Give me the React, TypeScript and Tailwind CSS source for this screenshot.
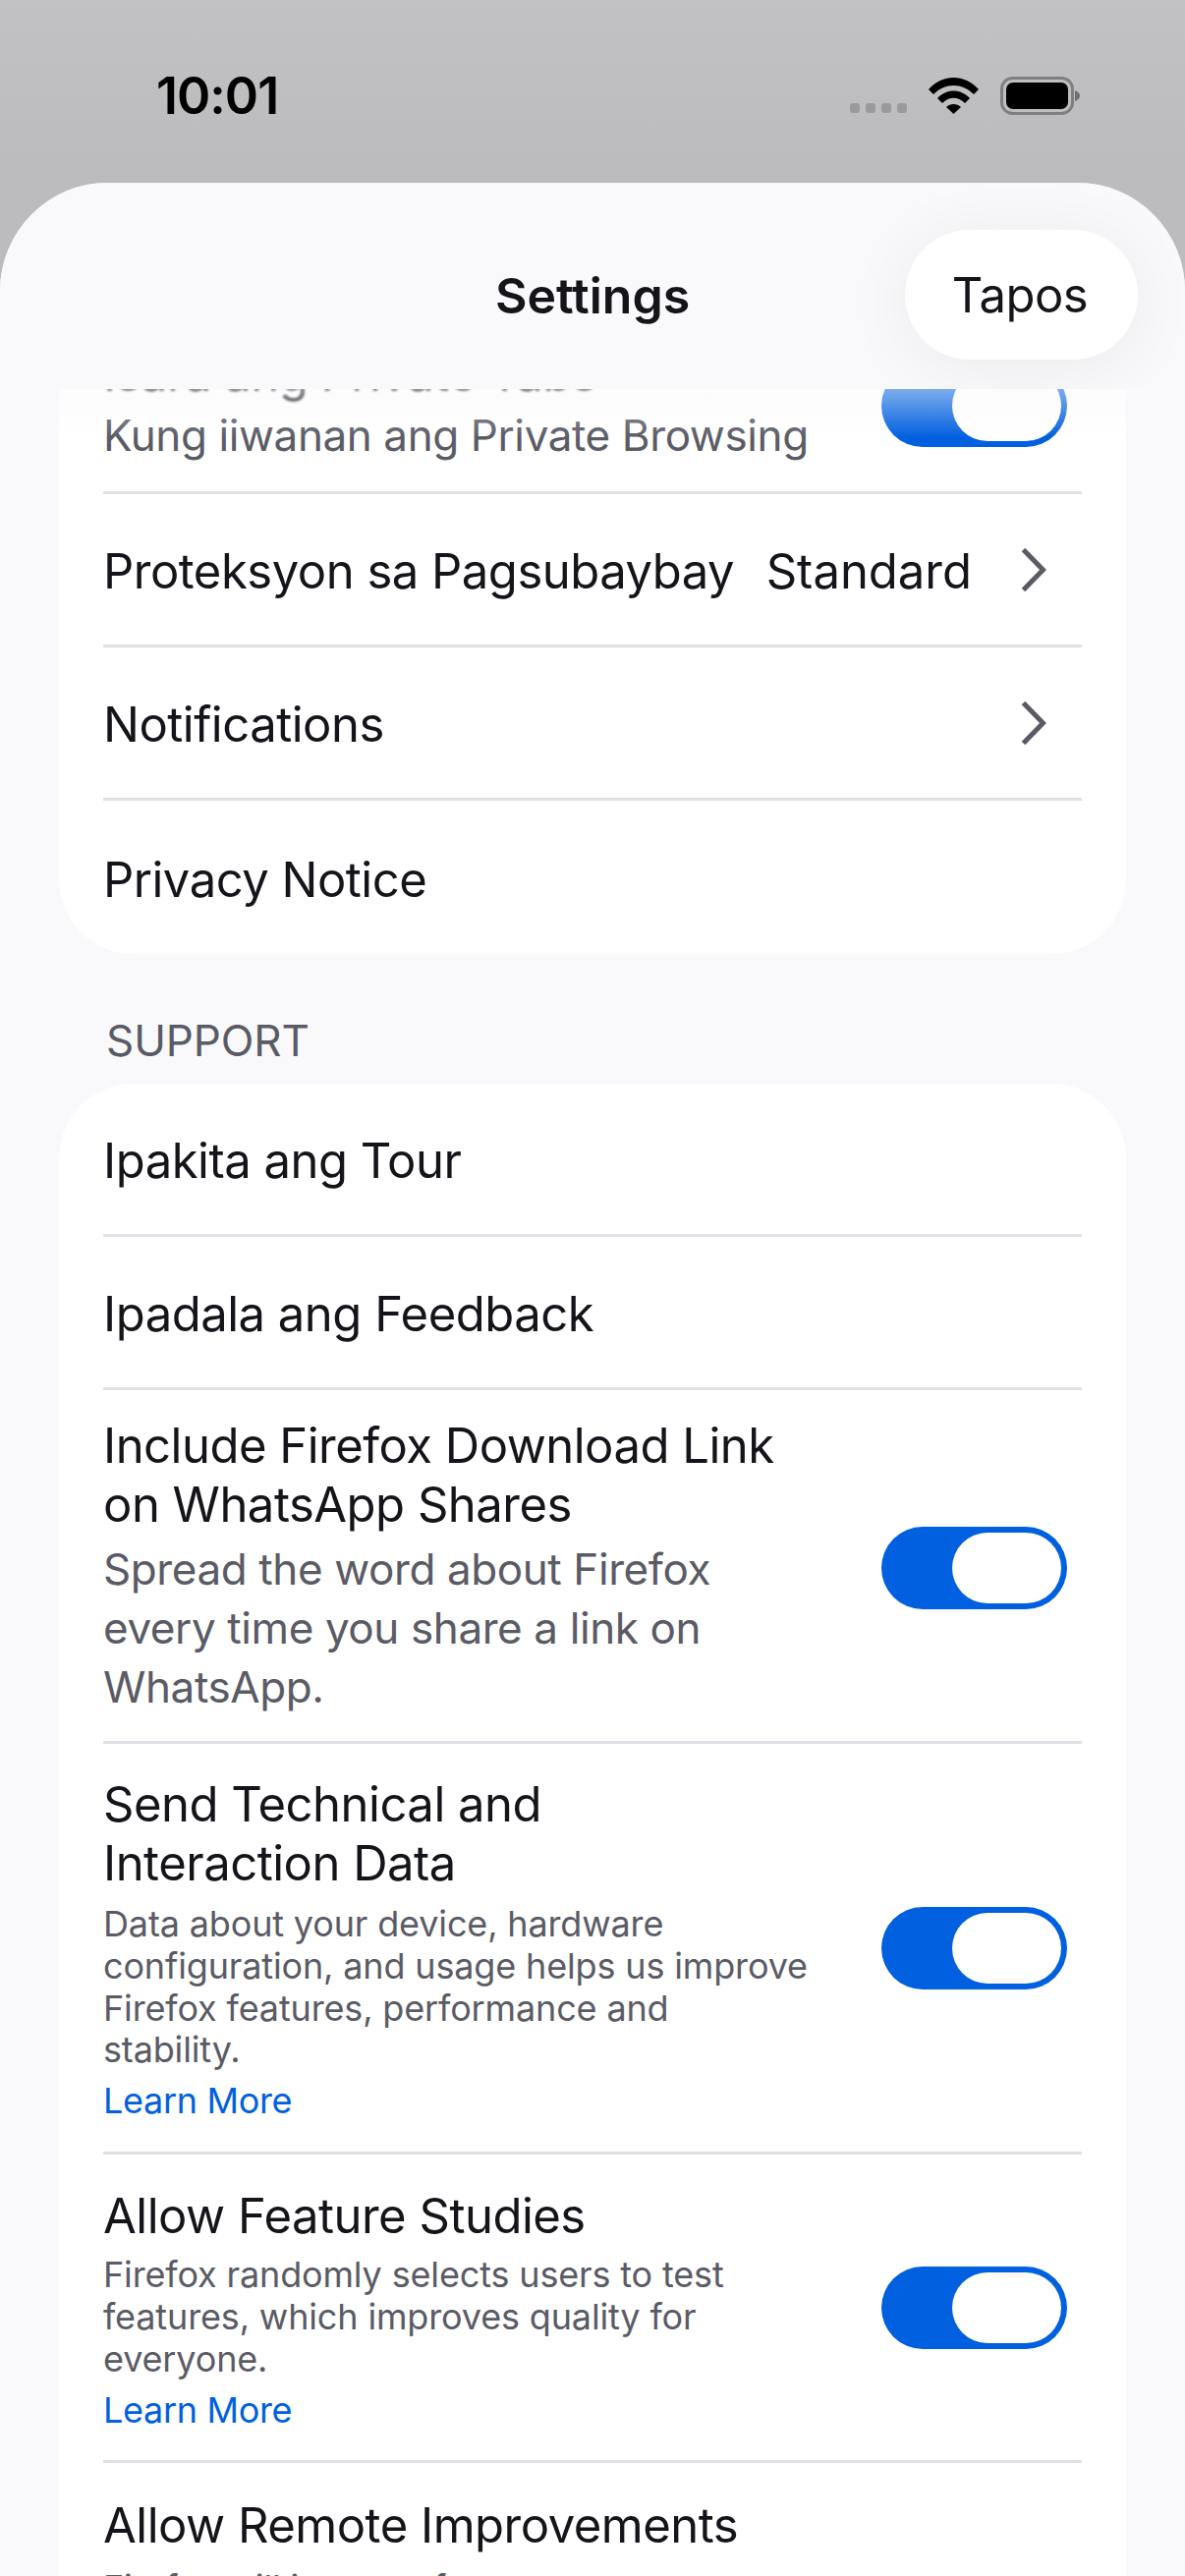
import React from 'react';

const Toggle: React.FC = () => (
  <div className="flex h-[84px] w-[189px] shrink-0 justify-end rounded-full bg-[#0060df] p-[6px]">
    <div className="h-[72px] w-[111px] rounded-full bg-white" />
  </div>
);

const Chevron: React.FC = () => (
  <svg width="26" height="46" viewBox="0 0 26 46" className="shrink-0">
    <path d="M2.500 2.500 L22.500 23 L2.500 43.500" fill="none" stroke="#5b5b66" strokeWidth="5" />
  </svg>
);

const Divider: React.FC = () => <div className="mx-[45px] h-[3px] bg-[#e0e0e6]" />;

const titleText = 'whitespace-nowrap text-[49px] leading-[60px] tracking-[-0.5px] text-[#15141a]';

const SimpleRow: React.FC<{ title: string; value?: string; chevron?: boolean; height: string }> = ({
  title,
  value,
  chevron,
  height,
}) => (
  <div className={`flex items-center justify-between pl-[45px] pr-[81px] ${height}`}>
    <span className={`pt-[5px] ${titleText}`}>{title}</span>
    <div className="flex items-center">
      {value && (
        <span className="mr-[50px] whitespace-nowrap pt-[5px] text-[49px] leading-[60px] text-[#15141a]">{value}</span>
      )}
      {chevron && <Chevron />}
    </div>
  </div>
);

const ToggleRow: React.FC<{
  title: string[];
  sub: string[];
  small?: boolean;
  link?: boolean;
  height: string;
  rowClass?: string;
  textClass?: string;
  titleClass?: string;
}> = ({ title, sub, small, link, height, rowClass, textClass, titleClass }) => (
  <div className={`flex items-center justify-between pl-[45px] pr-[60px] ${height} ${rowClass ?? ''}`}>
    <div className={textClass}>
      <div className={titleClass}>
        {title.map((t) => (
          <div key={t} className={titleText}>
            {t}
          </div>
        ))}
      </div>
      <div className={small ? 'mt-[12px]' : 'mt-[6px]'}>
        {sub.map((s) => (
          <div
            key={s}
            className={
              small
                ? 'whitespace-nowrap text-[36px] leading-[42.7px] tracking-[-0.15px] text-[#5b5b66]'
                : 'whitespace-nowrap text-[44px] leading-[60px] tracking-[-0.4px] text-[#5b5b66]'
            }
          >
            {s}
          </div>
        ))}
      </div>
      {link && <div className="mt-[8px] text-[36px] leading-[44px] tracking-[-0.33px] text-[#0060df]">Learn More</div>}
    </div>
    <Toggle />
  </div>
);

const App: React.FC = () => {
  return (
    <div className="flex h-[2622px] w-[1206px] flex-col overflow-hidden bg-[#bcbcbe] font-[Inter,sans-serif]">
      {/* Status bar */}
      <div className="flex h-[186px] shrink-0 items-start justify-between bg-gradient-to-b from-[#c2c2c4] to-[#bbbbbd] pl-[159px] pr-[106px] pt-[66px]">
        <span className="text-[52px] font-semibold leading-[64px] tracking-[-1px] text-black">10:01</span>
        <svg width="235" height="41" viewBox="0 0 235 41" className="mt-[12px]">
          <g fill="#9a9a9c">
            <rect x="0" y="27" width="10" height="10" rx="3" />
            <rect x="16" y="27" width="10" height="10" rx="3" />
            <rect x="32" y="27" width="10" height="10" rx="3" />
            <rect x="48" y="27" width="10" height="10" rx="3" />
          </g>
          <path
            d="M80 13 C94 -3 117 -3 131 13 L126 18 C114 6 97 6 85 18 Z M89 22 C98 12 113 12 122 22 L117 27 C110 20 101 20 94 27 Z M98 31 C102 27 109 27 113 31 L105.500 38 Z"
            fill="#000"
          />
          <rect x="154.500" y="1.500" width="72" height="36" rx="11" fill="none" stroke="#7f7f81" strokeWidth="3" />
          <rect x="159" y="6" width="63" height="27" rx="7" fill="#000" />
          <path d="M229 14 C232 15 234 17 234 19.500 C234 22 232 24 229 25 Z" fill="#6f6f71" />
        </svg>
      </div>

      {/* Sheet */}
      <div className="relative flex min-h-0 flex-1 flex-col overflow-hidden rounded-t-[110px] bg-[#f9f9fb]">
        {/* Nav bar */}
        <div className="relative z-10 flex h-[210px] shrink-0 items-center justify-center overflow-hidden bg-[#f9f9fb]">
          <span className="mt-[20px] text-[50px] font-semibold leading-[60px] text-[#15141a]">Settings</span>
          <div className="absolute right-[48px] top-[48px] flex h-[132px] w-[237px] items-center justify-center rounded-full bg-white pr-[3px] pt-[2px] text-[49px] leading-[60px] tracking-[-0.5px] text-[#15141a] shadow-[0_8px_70px_rgba(0,0,0,0.06)]">
            Tapos
          </div>
        </div>

        {/* Scrolled content */}
        <div className="relative min-h-0 flex-1 overflow-hidden">
          <div className="pointer-events-none absolute inset-x-0 top-0 z-[5] h-[50px] bg-gradient-to-b from-[#f9f9fb]/50 to-transparent" />
          <div className="-mt-[71px] px-[60px]">
            <div className="overflow-hidden rounded-b-[76px] bg-white">
              <ToggleRow
                title={['Isara ang Private Tabs']}
                sub={['Kung iiwanan ang Private Browsing']}
                height="h-[175px]"
                textClass="-mt-[6px]"
                titleClass="-mb-[4px] pt-[4px] blur-[1px]"
              />
              <Divider />
              <SimpleRow title="Proteksyon sa Pagsubaybay" value="Standard" chevron height="h-[153px]" />
              <Divider />
              <SimpleRow title="Notifications" chevron height="h-[153px]" />
              <Divider />
              <SimpleRow title="Privacy Notice" height="h-[156px]" />
            </div>

            <div className="mt-[63px] pl-[48px] text-[44px] leading-[50px] tracking-[-0.1px] text-[#5b5b66]">SUPPORT</div>

            <div className="mt-[19px] rounded-t-[76px] bg-white">
              <SimpleRow title="Ipakita ang Tour" height="h-[153px]" />
              <Divider />
              <SimpleRow title="Ipadala ang Feedback" height="h-[153px]" />
              <Divider />
              <ToggleRow
                title={['Include Firefox Download Link', 'on WhatsApp Shares']}
                sub={['Spread the word about Firefox', 'every time you share a link on', 'WhatsApp.']}
                height="h-[357px]"
                rowClass="pt-[4px]"
                textClass="-mt-[4px]"
                titleClass="-mb-[1px] pt-[1px]"
              />
              <Divider />
              <ToggleRow
                title={['Send Technical and', 'Interaction Data']}
                sub={[
                  'Data about your device, hardware',
                  'configuration, and usage helps us improve',
                  'Firefox features, performance and',
                  'stability.',
                ]}
                small
                link
                height="h-[415px]"
                titleClass="-mb-[2px] pt-[2px]"
              />
              <Divider />
              <ToggleRow
                title={['Allow Feature Studies']}
                sub={['Firefox randomly selects users to test', 'features, which improves quality for', 'everyone.']}
                small
                link
                height="h-[311px]"
                titleClass="-mb-[4px] pt-[4px]"
              />
              <Divider />
              <div className="pl-[45px] pt-[34px]">
                <div className={titleText}>Allow Remote Improvements</div>
                <div className="mt-[12px] text-[36px] leading-[42.7px] tracking-[-0.15px] text-[#5b5b66]">
                  Firefox will improve features
                </div>
              </div>
            </div>
          </div>
        </div>
      </div>
    </div>
  );
};

export default App;
